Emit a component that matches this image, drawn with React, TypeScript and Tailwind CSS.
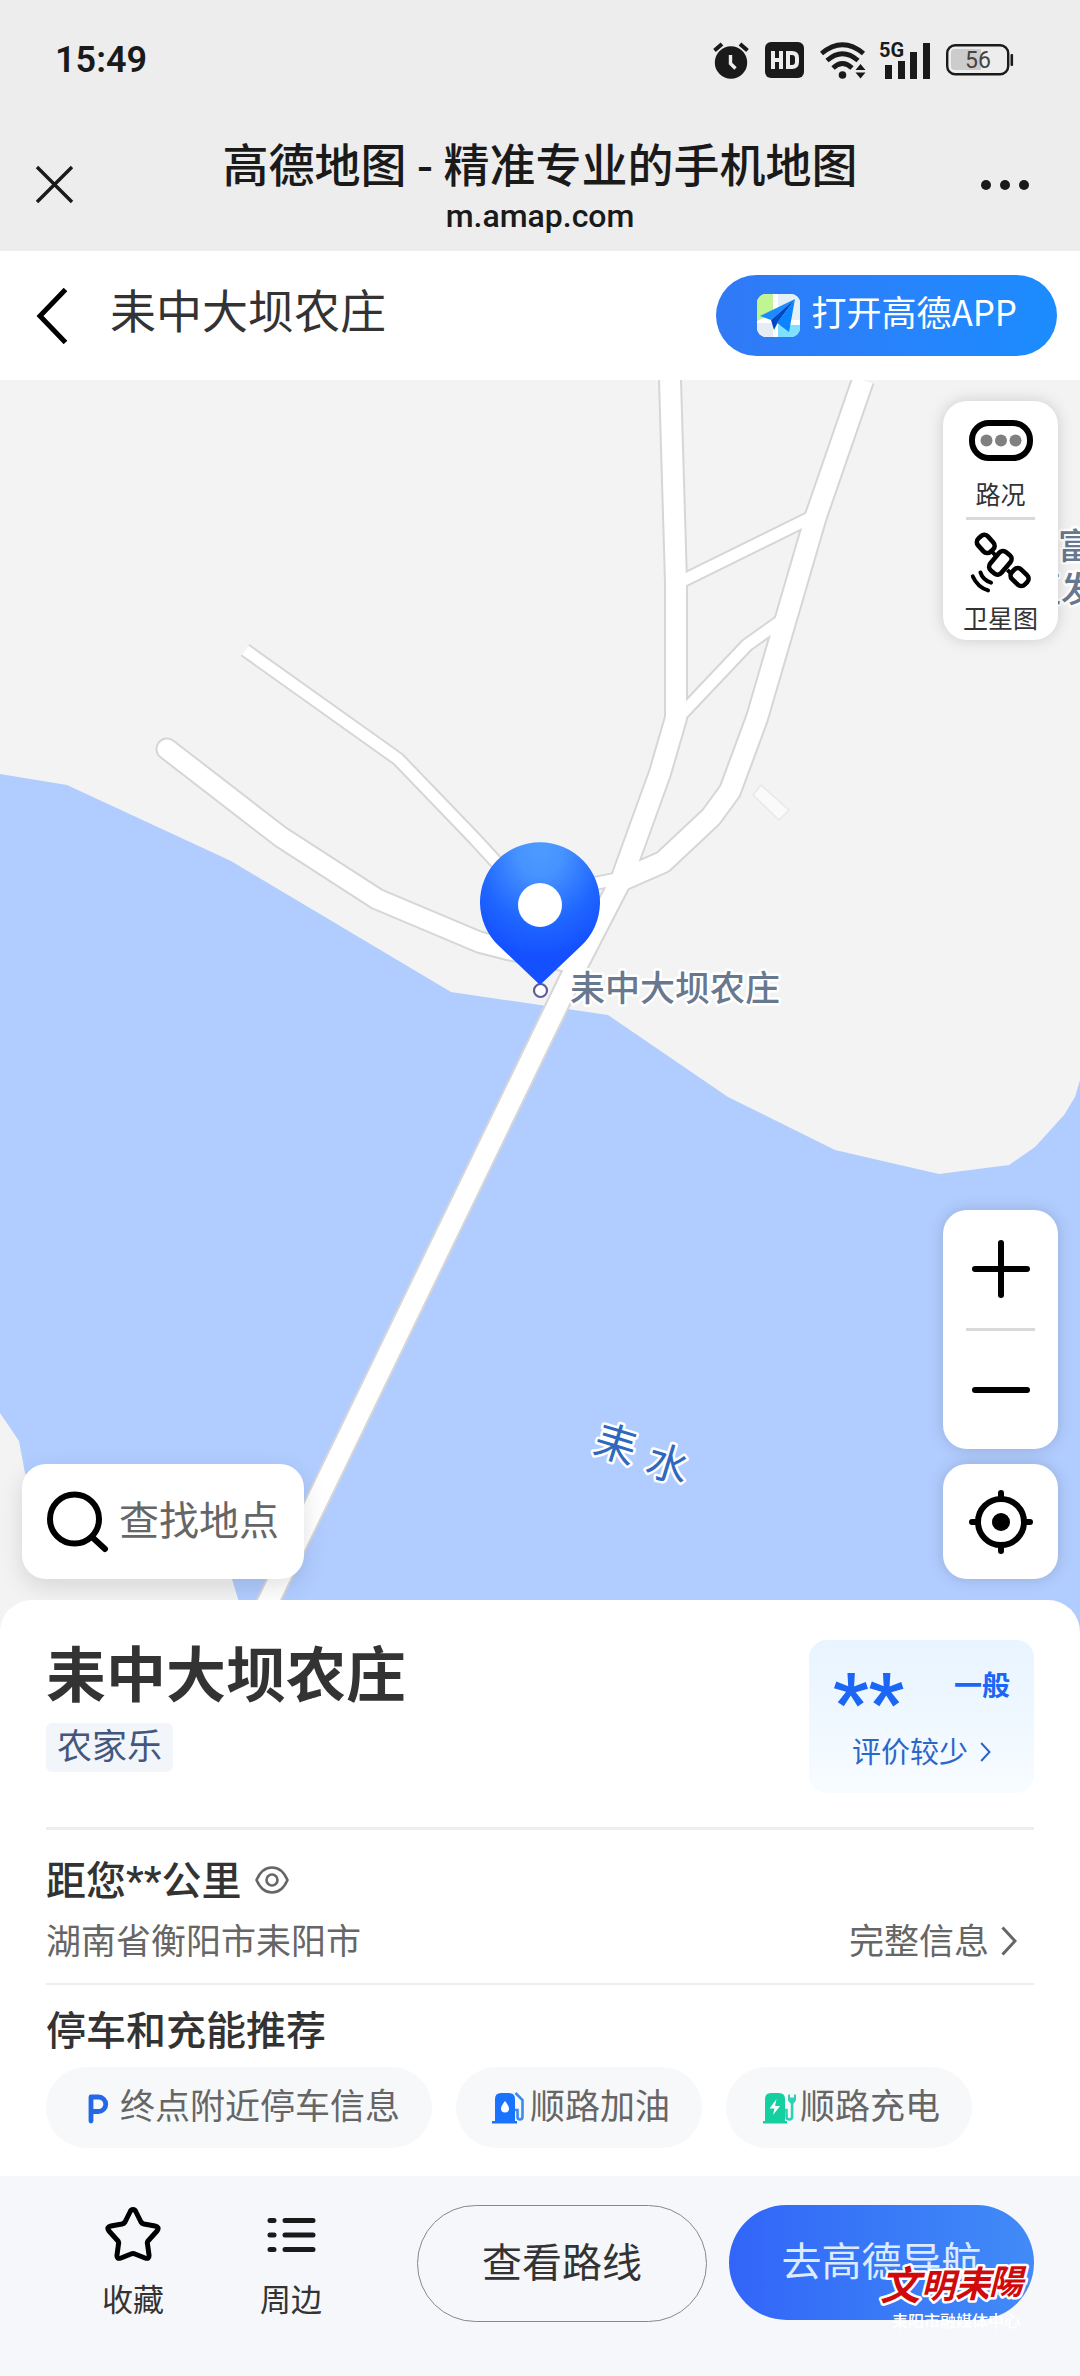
import type { ReactNode } from "react";

const CARD_SHADOW = "shadow-[0_0_16px_rgba(0,0,0,0.16)]";

function AlarmIcon() {
  return (
    <svg viewBox="0 0 36 37" className="h-[37px] w-9" aria-hidden="true">
      <circle cx="18" cy="20.500" r="16.200" fill="#1a1a1a" />
      <path d="M1.500 8.500 9 2M34.500 8.500 27 2" stroke="#1a1a1a" strokeWidth="4" fill="none" />
      <path d="M17.500 13v8.500l5 5" stroke="#ededed" strokeWidth="3.400" fill="none" />
    </svg>
  );
}

function HdIcon() {
  return (
    <svg viewBox="0 0 39 36" className="h-9 w-[39px]" aria-hidden="true">
      <rect width="39" height="36" rx="6" fill="#1a1a1a" />
      <path d="M8 9v18M16 9v18M8 18h8M23 9v18M22 11h5q5 0 5 5v4q0 5-5 5h-5" stroke="#ededed" strokeWidth="4" fill="none" />
    </svg>
  );
}

function WifiIcon() {
  return (
    <svg viewBox="0 0 46 37" className="h-[37px] w-[46px]" aria-hidden="true">
      <g stroke="#1a1a1a" strokeWidth="4.800" fill="none">
        <path d="M1.500 11.500Q22.500-6 43.500 11.500" />
        <path d="M7 18.500Q22.500 5 38 18.500" />
        <path d="M13 26Q22.500 17 32 26" />
      </g>
      <circle cx="22.500" cy="33" r="3.800" fill="#1a1a1a" />
      <path d="M40.500 22l5 6h-10zM40.500 36.500l5-6h-10z" fill="#1a1a1a" />
    </svg>
  );
}

function SignalIcon() {
  return (
    <svg viewBox="0 0 52 38" className="h-[38px] w-[52px] overflow-visible" aria-hidden="true">
      <text x="0" y="16" fontSize="20" fontWeight="700" fontFamily="Roboto, sans-serif" fill="#1a1a1a">5G</text>
      <path d="M6 24h7v14H6zM19 20h7v18h-7zM31 11h7v27h-7zM44 2h7v36h-7z" fill="#1a1a1a" />
    </svg>
  );
}

function BatteryIcon() {
  return (
    <svg viewBox="0 0 68 32" className="h-8 w-[68px]" aria-hidden="true">
      <rect x="1.200" y="1.200" width="61" height="29" rx="8" fill="none" stroke="#1a1a1a" strokeWidth="2.400" />
      <path d="M9 5h26v21H9q-4 0-4-4V9q0-4 4-4z" fill="#cccccc" />
      <rect x="64.500" y="10" width="2.600" height="12" rx="1" fill="#1a1a1a" />
      <text x="32" y="24" textAnchor="middle" fontSize="23" fontFamily="Roboto, sans-serif" fill="#444">56</text>
    </svg>
  );
}

function AmapLogo() {
  return (
    <svg viewBox="0 0 43 43" className="h-[43px] w-[43px]" aria-hidden="true">
      <defs>
        <clipPath id="logo-clip"><rect width="43" height="43" rx="9" /></clipPath>
      </defs>
      <g clipPath="url(#logo-clip)">
        <rect width="43" height="43" fill="#ffffff" />
        <path d="M0 0h16v20L0 27z" fill="#bff593" />
        <path d="M21 0h22v26H21z" fill="#e3f0f5" />
        <path d="M0 29h16v14H0z" fill="#e6edf2" />
        <path d="M21 31h22v12H21z" fill="#7fe0ff" />
      </g>
      <path d="M38 5 3 22l11 4z" fill="#1a8cff" />
      <path d="M38 5 14 26l3 10 4-8z" fill="#0047c2" />
      <path d="M38 5 20 29l12 9z" fill="#0a84ff" />
    </svg>
  );
}

function TrafficIcon() {
  return (
    <svg viewBox="0 0 64 41" className="h-[41px] w-16" aria-hidden="true">
      <rect x="3" y="3" width="58" height="35" rx="17" fill="none" stroke="#000" strokeWidth="6" />
      <g fill="#808080">
        <circle cx="17.500" cy="20.500" r="6" /><circle cx="32" cy="20.500" r="6" /><circle cx="46.500" cy="20.500" r="6" />
      </g>
    </svg>
  );
}

function SatelliteIcon() {
  return (
    <svg viewBox="0 0 186 184" className="h-[61px] w-[62px]" aria-hidden="true">
      <g fill="none" stroke="#000" strokeWidth="14">
        <rect x="69" y="57" width="44" height="72" rx="15" transform="rotate(40 91 93)" />
        <rect x="20" y="16" width="54" height="40" rx="15" transform="rotate(48 47 36)" />
        <rect x="122" y="116" width="54" height="40" rx="15" transform="rotate(44 149 136)" />
        <g strokeLinecap="round" strokeWidth="12">
          <path d="M31 122Q38 145 63 153" />
          <path d="M8 134Q22 166 54 176" />
        </g>
      </g>
      <path d="M66 60l10 10M112 114l10 10" stroke="#000" strokeWidth="12" />
    </svg>
  );
}

function LocateIcon() {
  return (
    <svg viewBox="0 0 64 64" className="h-16 w-16" aria-hidden="true">
      <g fill="none" stroke="#000" strokeWidth="6" strokeLinecap="round">
        <circle cx="32" cy="32" r="23" />
        <path d="M32 3v5M32 56v5M3 32h5M56 32h5" />
      </g>
      <circle cx="32" cy="32" r="9" />
    </svg>
  );
}

function MapCanvas() {
  const main = "M670 0 676 202V338L660 393 622 498 574 591 269 1220 253 1252";
  const east = "M863 0 816 136 757 338 730 411 711 437 663 482 622 500";
  const shore = "M167 369 281 457 377 519 479 562 510 570 575 583";
  const lane = "M245 270 398 379 475 459 540 530";
  const linkA = "M676 204 816 135";
  const linkB = "M676 340 747 265 785 238";
  const spur = "M560 510 597 503 622 498";
  return (
    <svg
      viewBox="0 0 1080 1252"
      preserveAspectRatio="xMidYMid slice"
      className="absolute inset-0 h-full w-full"
      role="img"
      aria-label="地图"
    >
      <defs>
        <radialGradient id="pin" cx="0.5" cy="0.05" r="0.95">
          <stop offset="0" stopColor="#4d9bff" />
          <stop offset="0.2" stopColor="#4793ff" />
          <stop offset="0.55" stopColor="#1f66ff" />
          <stop offset="0.8" stopColor="#1450ff" />
          <stop offset="1" stopColor="#1450ff" />
        </radialGradient>
      </defs>
      <rect width="1080" height="1252" fill="#f3f3f3" />
      <path
        fill="#b1cdff"
        d="M0 394 67 405 231 481 451 612 608 635 728 717 835 770 939 794 1009 785 1035 767 1064 735 1075 717 1080 700V1252H248L232 1199 60 1160 25 1093 19 1061 0 1033z"
      />
      <path d="M761 405 789 430 779 440 753 415z" fill="#fafafa" stroke="#e8e8e8" strokeWidth="1.500" />
      <g fill="none" strokeLinejoin="round" stroke="#d6d6d6">
        <path d={lane} strokeWidth="15" />
        <path d={spur} strokeWidth="15" />
        <path d={linkA} strokeWidth="15" />
        <path d={linkB} strokeWidth="15" />
        <path d={shore} strokeWidth="23" strokeLinecap="round" />
        <path d={east} strokeWidth="24" />
        <path d={main} strokeWidth="24" />
      </g>
      <g fill="none" strokeLinejoin="round" stroke="#ffffff">
        <path d={lane} strokeWidth="11" />
        <path d={spur} strokeWidth="11" />
        <path d={linkA} strokeWidth="11" />
        <path d={linkB} strokeWidth="11" />
        <path d={shore} strokeWidth="19" strokeLinecap="round" />
        <path d={east} strokeWidth="20" />
        <path d={main} strokeWidth="20" />
      </g>
      <circle cx="540.500" cy="610.500" r="6.500" fill="#fff" stroke="#5d5d96" strokeWidth="2.200" />
      <path d="M540 605 499 566A60 60 0 1 1 581 566z" fill="url(#pin)" />
      <circle cx="540" cy="525" r="22" fill="#fff" />
      <g fontWeight="500" strokeLinejoin="round" paintOrder="stroke" stroke="#ffffff" strokeWidth="5">
        <g fill="#68788f" fontSize="35">
          <text x="570" y="621">耒中大坝农庄</text>
          <text x="1058" y="179">富</text>
          <text x="1026" y="222">区发</text>
        </g>
        <g fill="#2f68bd" fontSize="42" fontWeight="400">
          <text textAnchor="middle" transform="translate(616 1063) rotate(17)" y="16">耒</text>
          <text textAnchor="middle" transform="translate(668 1083) rotate(17)" y="16">水</text>
        </g>
      </g>
    </svg>
  );
}

function Divider() {
  return <div className="mx-auto h-[3px] w-[69px] shrink-0 bg-[#d9d9d9]" />;
}

function MapControls() {
  const card = `w-[115px] rounded-3xl bg-white ${CARD_SHADOW}`;
  return (
    <div className="relative flex flex-1 items-stretch justify-between px-[22px] pt-[21px] pb-[53px]">
      <button
        type="button"
        className="flex h-[115px] w-[282px] items-center self-end rounded-3xl bg-white pl-[25px] text-[40px] text-[#666] shadow-[0_8px_24px_rgba(0,0,0,0.12)]"
      >
        <svg viewBox="0 0 62 62" className="mr-[10px] h-[62px] w-[62px]" fill="none" stroke="#000" strokeWidth="6" aria-hidden="true">
          <circle cx="27.500" cy="28" r="24.500" />
          <path d="M45 46 58 58" strokeLinecap="round" />
        </svg>
        <span className="pb-2">查找地点</span>
      </button>
      <div className="flex flex-col">
        <div className={`${card} flex h-[239px] flex-col text-[25px] leading-8 text-[#333]`}>
          <button type="button" className="flex flex-1 flex-col items-center justify-end gap-4 pb-2">
            <TrafficIcon />
            路况
          </button>
          <Divider />
          <button type="button" className="flex flex-1 flex-col items-center justify-start gap-2 pt-3">
            <SatelliteIcon />
            卫星图
          </button>
        </div>
        <div className={`${card} mt-auto flex h-[239px] flex-col`}>
          <button type="button" aria-label="放大" className="grid flex-1 place-items-center">
            <svg viewBox="0 0 58 58" className="h-[58px] w-[58px]" stroke="#000" strokeWidth="6" strokeLinecap="round" aria-hidden="true">
              <path d="M29 3v52M3 29h52" />
            </svg>
          </button>
          <Divider />
          <button type="button" aria-label="缩小" className="grid flex-1 place-items-center">
            <svg viewBox="0 0 58 58" className="h-[58px] w-[58px]" stroke="#000" strokeWidth="6" strokeLinecap="round" aria-hidden="true">
              <path d="M3 29h52" />
            </svg>
          </button>
        </div>
        <button type="button" aria-label="定位" className={`${card} mt-[15px] grid h-[115px] place-items-center`}>
          <LocateIcon />
        </button>
      </div>
    </div>
  );
}

function ParkingIcon() {
  return (
    <svg viewBox="0 0 36 36" className="h-9 w-9" aria-hidden="true">
      <path d="M9 31V7h7.500a7 7 0 0 1 0 14.500H9" fill="none" stroke="#2468e8" strokeWidth="4.800" strokeLinecap="round" strokeLinejoin="round" />
    </svg>
  );
}

function FuelIcon() {
  return (
    <svg viewBox="0 0 36 36" className="h-9 w-9" aria-hidden="true">
      <path d="M3 31V9q0-6 6-6h8q6 0 6 6v22h2v2.500H0V31z" fill="#1a73ff" />
      <path d="M23 20h2.500v6.500q0 3 2.500 3t2.500-3V10L23.500 3" fill="none" stroke="#3a8dee" strokeWidth="2.600" />
      <path d="M13 11q-4 5-4 7.500a4 4 0 0 0 8 0Q17 16 13 11z" fill="#fff" />
    </svg>
  );
}

function ChargeIcon() {
  return (
    <svg viewBox="0 0 36 36" className="h-9 w-9" aria-hidden="true">
      <path d="M3 31V9q0-6 6-6h8q6 0 6 6v22h2v2.500H1V31z" fill="#14cfa0" />
      <path d="M23 20h1.500v6.500q0 3 2.800 3t2.800-3V12" fill="none" stroke="#2bd3b4" strokeWidth="2.600" />
      <path d="M26 4.500h2v3h4v-3h2v6l-2.500 3h-3L26 10.500z" fill="#2bd3b4" />
      <path d="M14.500 9 7.500 18.500h5L11 25l7-9h-5z" fill="#fff" />
    </svg>
  );
}

function Chip({ icon, children }: { icon: ReactNode; children: ReactNode }) {
  return (
    <button
      type="button"
      className="flex h-[81px] items-center gap-0.5 rounded-full bg-[#f7f8fa] pr-8 pl-9 text-[35px] leading-[44px] whitespace-nowrap text-[#666]"
    >
      {icon}
      <span className="pb-2">{children}</span>
    </button>
  );
}

function Chevron({ className }: { className: string }) {
  return (
    <svg viewBox="0 0 16 30" className={className} fill="none" stroke="currentColor" aria-hidden="true">
      <path d="M1.500 1.500 14 15 1.500 28.500" />
    </svg>
  );
}

export default function App() {
  return (
    <div className="flex min-h-screen flex-col bg-white font-['Noto_Sans_CJK_SC',sans-serif] text-[#333]">
      <div className="bg-[#ededed] text-[#1a1a1a]">
        <div className="flex h-[118px] items-center pt-0.5 pr-[66px] pl-[55px]">
          <span className="font-['Roboto',sans-serif] text-[36px] font-semibold">15:49</span>
          <div className="ml-auto flex items-center">
            <AlarmIcon />
            <span className="w-4" />
            <HdIcon />
            <span className="w-4" />
            <WifiIcon />
            <span className="w-[13px]" />
            <SignalIcon />
            <span className="w-[15px]" />
            <BatteryIcon />
          </div>
        </div>
        <header className="grid h-[133px] grid-cols-[1fr_auto_1fr] items-center pr-[50px] pl-[35px]">
          <button type="button" aria-label="关闭" className="justify-self-start">
            <svg viewBox="0 0 39 39" className="h-[39px] w-[39px]" stroke="#1a1a1a" strokeWidth="3.400" aria-hidden="true">
              <path d="M2 2 37 37M37 2 2 37" />
            </svg>
          </button>
          <div className="pl-[15px] text-center">
            <h1 className="text-[46px] leading-[56px] font-medium">高德地图 - 精准专业的手机地图</h1>
            <p className="pt-1.5 font-['Roboto',sans-serif] text-[32px] leading-10 font-medium">m.amap.com</p>
          </div>
          <button type="button" aria-label="更多" className="justify-self-end">
            <svg viewBox="0 0 50 12" className="h-3 w-[50px]" fill="#1a1a1a" aria-hidden="true">
              <circle cx="6" cy="6" r="5" /><circle cx="25" cy="6" r="5" /><circle cx="44" cy="6" r="5" />
            </svg>
          </button>
        </header>
      </div>

      <nav className="flex h-[129px] items-center pr-[23px] pl-9">
        <button type="button" aria-label="返回">
          <svg viewBox="0 0 32 56" className="h-14 w-8" fill="none" stroke="#000" strokeWidth="5" aria-hidden="true">
            <path d="M29.500 1.500 4 28 29.500 54.500" />
          </svg>
        </button>
        <h2 className="ml-[42px] pb-4 text-[46px] leading-[60px]">耒中大坝农庄</h2>
        <a
          href="#app"
          className="ml-auto flex h-[81px] items-center gap-[11px] rounded-full bg-linear-to-r from-[#3079f7] to-[#1b8cff] pr-10 pl-[41px] text-[35px] whitespace-nowrap text-white"
        >
          <AmapLogo />
          <span className="pb-2">打开高德APP</span>
        </a>
      </nav>

      <section className="relative flex min-h-[720px] flex-1 flex-col overflow-hidden">
        <MapCanvas />
        <MapControls />
      </section>

      <main className="relative -mt-8 rounded-t-[32px] bg-white px-[46px]">
        <section className="flex items-start justify-between border-b-[3px] border-[#eee] pt-10 pb-[34px]">
          <div>
            <h2 className="text-[60px] leading-[62px] font-bold">耒中大坝农庄</h2>
            <span className="mt-[21px] inline-block h-[49px] rounded-md bg-[#f2f5fa] px-[11px] text-[35px] leading-[42px] text-[#44567c]">
              农家乐
            </span>
          </div>
          <button
            type="button"
            className="h-[153px] w-[225px] rounded-[18px] bg-linear-to-b from-[#e8f4ff] to-[#f7fcff] px-6 text-[#1c66f5]"
          >
            <span className="flex h-[76px] justify-between">
              <span className="font-['Roboto',sans-serif] text-[78px] leading-[126px] font-bold">**</span>
              <span className="text-[28px] leading-[88px] font-bold">一般</span>
            </span>
            <span className="flex h-[77px] items-start justify-center gap-3 pt-3.5 text-[29px] leading-10 text-[#2b66cc]">
              评价较少
              <Chevron className="mt-3 h-5 w-[11px] stroke-[3]" />
            </span>
          </button>
        </section>

        <section className="border-b-2 border-[#eee] pt-6 pb-[22px]">
          <h3 className="flex h-12 items-center gap-[14px] text-[40px] leading-12 font-medium">
            <span>
              距您<span className="font-['Roboto',sans-serif] leading-none">**</span>公里
            </span>
            <svg viewBox="0 0 34 28" className="mt-1 h-7 w-[34px]" fill="none" stroke="#666" strokeWidth="2.600" aria-hidden="true">
              <path d="M1.500 14Q7 1.500 17 1.500T32.500 14Q27 26.500 17 26.500T1.500 14z" />
              <circle cx="17" cy="14" r="5.500" />
            </svg>
          </h3>
          <div className="mt-[15px] flex items-center justify-between pr-[17px] text-[35px] leading-[44px] text-[#666]">
            <p>湖南省衡阳市耒阳市</p>
            <a href="#detail" className="flex items-center gap-3">
              完整信息
              <Chevron className="mt-1 h-[30px] w-4 stroke-[3]" />
            </a>
          </div>
        </section>

        <section className="pt-[19px] pb-7">
          <h3 className="text-[40px] leading-12 font-medium">停车和充能推荐</h3>
          <div className="mt-[15px] flex gap-6">
            <Chip icon={<ParkingIcon />}>终点附近停车信息</Chip>
            <Chip icon={<FuelIcon />}>顺路加油</Chip>
            <Chip icon={<ChargeIcon />}>顺路充电</Chip>
          </div>
        </section>
      </main>

      <footer className="relative flex h-[200px] items-start bg-[#f5f7fa] pt-[29px] pr-[46px] pl-[54px]">
        <div className="flex flex-1 text-[31px] leading-10">
          <button type="button" className="flex w-[158px] flex-col items-center gap-[17px]">
            <svg viewBox="0 0 58 56" className="h-14 w-[58px]" fill="none" stroke="#000" strokeWidth="5" strokeLinejoin="round" aria-hidden="true">
              <path d="M29 4.500Q31 4.500 32 7L37 17Q38 18.500 40 19L51 21Q56 22 53 26L44 36Q43 37.500 43.500 39L45 50Q45.500 54.500 41 53L31 49Q29 48 27 49L17 53Q12.500 54.500 13 50L14.500 39Q15 37.500 14 36L5 26Q2 22 7 21L18 19Q20 18.500 21 17L26 7Q27 4.500 29 4.500z" />
            </svg>
            收藏
          </button>
          <button type="button" className="flex w-[158px] flex-col items-center gap-[17px]">
            <svg viewBox="0 0 50 56" className="h-14 w-[50px]" stroke="#1a1a1a" strokeWidth="5" strokeLinecap="round" aria-hidden="true">
              <path d="M4 15.500h4M4 30h4M4 44.500h4M19 15.500h28M19 30h28M19 44.500h28" />
            </svg>
            周边
          </button>
        </div>
        <button type="button" className="h-[117px] w-[290px] rounded-full border border-[#888] pb-2 text-[40px] text-[#333]">
          查看路线
        </button>
        <button
          type="button"
          className="ml-[22px] h-[115px] w-[305px] rounded-full bg-linear-to-r from-[#3265f8] to-[#428bf7] pb-2 text-[40px] text-[#dcebff]"
        >
          去高德导航
        </button>
        <svg viewBox="0 0 150 80" className="pointer-events-none absolute right-[50px] bottom-[42px] h-20 w-[150px] overflow-visible" role="img" aria-label="文明耒陽">
          <g fontWeight="700" fontStyle="italic" fill="#d00a0a" stroke="#ffffff" strokeWidth="5" strokeLinejoin="round" paintOrder="stroke">
            <text x="0" y="46" fontSize="40">文</text>
            <text x="41" y="44" fontSize="34">明</text>
            <text x="75" y="43" fontSize="36">耒</text>
            <text x="109" y="40" fontSize="34">陽</text>
          </g>
          <text x="12" y="73" fontSize="16" fontWeight="500" fill="#ffffff">耒阳市融媒体中心</text>
        </svg>
      </footer>
    </div>
  );
}
